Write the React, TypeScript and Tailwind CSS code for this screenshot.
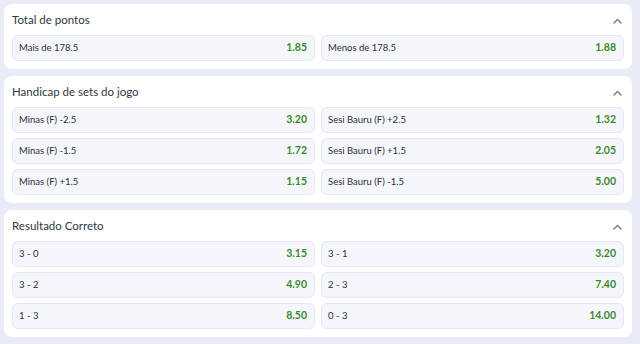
import React from "react";

type Odd = { label: string; price: string };

const markets: { title: string; odds: Odd[] }[] = [
  {
    title: "Total de pontos",
    odds: [
      { label: "Mais de 178.5", price: "1.85" },
      { label: "Menos de 178.5", price: "1.88" },
    ],
  },
  {
    title: "Handicap de sets do jogo",
    odds: [
      { label: "Minas (F) -2.5", price: "3.20" },
      { label: "Sesi Bauru (F) +2.5", price: "1.32" },
      { label: "Minas (F) -1.5", price: "1.72" },
      { label: "Sesi Bauru (F) +1.5", price: "2.05" },
      { label: "Minas (F) +1.5", price: "1.15" },
      { label: "Sesi Bauru (F) -1.5", price: "5.00" },
    ],
  },
  {
    title: "Resultado Correto",
    odds: [
      { label: "3 - 0", price: "3.15" },
      { label: "3 - 1", price: "3.20" },
      { label: "3 - 2", price: "4.90" },
      { label: "2 - 3", price: "7.40" },
      { label: "1 - 3", price: "8.50" },
      { label: "0 - 3", price: "14.00" },
    ],
  },
];

function Chevron() {
  return (
    <svg width="9" height="6" viewBox="0 0 9 6" className="mr-[2px] mt-[2px]">
      <path d="M1 5 L4.5 1.5 L8 5" fill="none" stroke="#6c7aa3" strokeWidth="1.4" strokeLinecap="round" strokeLinejoin="round" />
    </svg>
  );
}

export default function App() {
  return (
    <div
      className="w-[640px] h-[344px] overflow-hidden bg-[#e9ebf7] pl-[4px] pr-[8px] pt-[4px] flex flex-col gap-[7px]"
      style={{ fontFamily: "Lato, 'Noto Sans', sans-serif" }}
    >
      {markets.map((m) => (
        <section key={m.title} className="bg-white rounded-[8px] px-[8px] pb-[8px]">
          <div className="h-[31px] flex items-center justify-between">
            <h3 className="text-[11.5px] text-[#2f3644] font-normal">{m.title}</h3>
            <Chevron />
          </div>
          <div className="grid grid-cols-2 gap-x-[6px] gap-y-[5px]">
            {m.odds.map((o) => (
              <button
                key={o.label}
                className="h-[26px] flex items-center justify-between rounded-[6px] border border-[#e4e7f4] bg-[#f5f6fb] pl-[6px] pr-[7px]"
              >
                <span className="text-[9.5px] text-[#2a2f3a]">{o.label}</span>
                <span className="text-[10.5px] font-bold text-[#3b8a2b]">{o.price}</span>
              </button>
            ))}
          </div>
        </section>
      ))}
    </div>
  );
}
